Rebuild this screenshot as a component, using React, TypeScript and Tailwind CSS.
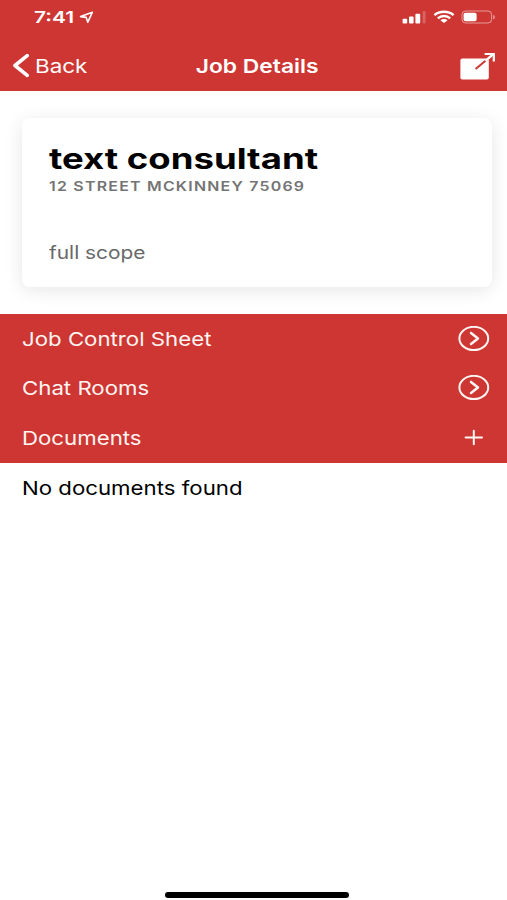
import React from "react";

interface RowProps {
    label: string;
    icon: React.ReactNode;
}

const CircleArrow = () => (
    <svg width="32" height="26" viewBox="0 0 32 26" fill="none" stroke="#fff5f2">
        <ellipse cx="15.8" cy="12.4" rx="14.4" ry="11.6" strokeWidth="2" />
        <path d="M13 6.9 L20 12.4 L13 17.9" strokeWidth="2.5" strokeLinecap="round" strokeLinejoin="round" />
    </svg>
);

const Plus = () => (
    <svg width="32" height="26" viewBox="0 0 32 26" fill="none" stroke="#fff5f2" strokeWidth="2" strokeLinecap="round">
        <path d="M7.6 12.5 H24 M15.8 5.8 V19.2" />
    </svg>
);

const rows: RowProps[] = [
    { label: "Job Control Sheet", icon: <CircleArrow /> },
    { label: "Chat Rooms", icon: <CircleArrow /> },
    { label: "Documents", icon: <Plus /> },
];

const StatusBar = () => (
    <div className="flex h-[34px] items-center justify-between pl-[34px] pr-[11px]">
        <div className="flex items-center pt-px">
            <span className="w-[45px] whitespace-nowrap text-[16.5px] leading-none font-semibold">
                <span className="inline-block origin-left scale-x-[1.27]">7:41</span>
            </span>
            <svg width="15" height="13" viewBox="0 0 15 13" fill="none" stroke="#fff" strokeWidth="1.6" strokeLinejoin="round">
                <path d="M13.4 1.2 L1.6 5.6 L7.2 6.4 L8.8 11.2 Z" />
            </svg>
        </div>
        <div className="flex items-center">
            <svg width="24" height="14" viewBox="0 0 24 14" fill="#fff">
                <rect x="0.6" y="8.8" width="4.6" height="4.6" rx="1" />
                <rect x="7" y="6.6" width="4.6" height="6.8" rx="1" />
                <rect x="13.4" y="3.8" width="4.8" height="9.6" rx="1" />
                <rect x="20.6" y="1" width="3" height="12.4" rx="1" fillOpacity="0.22" />
            </svg>
            <svg className="ml-[7px]" width="22" height="14" viewBox="0 0 22 14" fill="none" stroke="#fff" strokeWidth="2.3">
                <path d="M1.4 5.2 C6.5 0.6 15.5 0.6 20.6 5.2" />
                <path d="M4.8 8.3 C8.2 5.2 13.8 5.2 17.2 8.3" />
                <path d="M11 13 L7.4 10.2 C9.3 8.7 12.7 8.7 14.6 10.2 Z" fill="#fff" stroke="none" />
            </svg>
            <svg className="ml-[6px]" width="35" height="14" viewBox="0 0 35 14">
                <rect x="1" y="1" width="29.6" height="12" rx="3.6" fill="none" stroke="#fff" strokeOpacity="0.5" />
                <rect x="2.6" y="2.8" width="13" height="8.4" rx="1.8" fill="#fff" />
                <path d="M32.2 5 C34.4 5.6 34.4 8.8 32.2 9.4 Z" fill="#fff" fillOpacity="0.5" />
            </svg>
        </div>
    </div>
);

const NavBar = () => (
    <div className="grid h-[56px] grid-cols-[140px_1fr_140px] items-center text-[19px]">
        <div className="flex items-center pt-2 pl-3">
            <svg width="18" height="24" viewBox="0 0 18 24" fill="none" stroke="#fff" strokeWidth="3.6" strokeLinecap="round" strokeLinejoin="round">
                <path d="M15.2 1.6 L3 11.5 L15.2 21.4" />
            </svg>
            <span className="ml-[5px] inline-block origin-left scale-x-[1.18] pt-0.5 leading-6">Back</span>
        </div>
        <div className="pt-2.5 pl-2 text-center leading-6 font-semibold">
            <span className="inline-block scale-x-[1.2] whitespace-nowrap">Job Details</span>
        </div>
        <div className="flex justify-end pt-2 pr-[11px]">
            <svg width="37" height="28" viewBox="0 0 37 28" fill="none">
                <rect x="1.4" y="6.4" width="28.4" height="21.2" rx="2" fill="#fff" />
                <path d="M16.6 17 L34 2.4" stroke="#ce3633" strokeWidth="2" />
                <path d="M26.4 8.8 L34 2.4" stroke="#fff" strokeWidth="2.4" />
                <path d="M25.6 2 H34.8 V9.4" stroke="#fff" strokeWidth="2.2" />
            </svg>
        </div>
    </div>
);

const JobCard = () => (
    <div className="mt-[27px] ml-[22px] h-[169px] w-[470px] rounded-lg bg-white pt-6 pl-[27px] shadow-[0_3px_18px_rgba(0,0,0,0.1)]">
        <h2 className="text-[29px] leading-[34px] font-bold text-black">
            <span className="inline-block origin-left scale-x-[1.26] whitespace-nowrap">text consultant</span>
        </h2>
        <p className="text-[13px] leading-5 font-semibold tracking-[1px] text-[#747474]">
            <span className="inline-block origin-left scale-x-[1.225] whitespace-nowrap">12 STREET MCKINNEY 75069</span>
        </p>
        <p className="mt-[45px] text-[18px] leading-6 text-[#686868]">
            <span className="inline-block origin-left scale-x-[1.16] whitespace-nowrap">full scope</span>
        </p>
    </div>
);

const Row = ({ label, icon }: RowProps) => (
    <div className="flex h-[49.5px] items-center justify-between pr-[17px] pl-[21.5px]">
        <span className="inline-block origin-left scale-x-[1.17] pt-0.5 whitespace-nowrap">{label}</span>
        {icon}
    </div>
);

export default function App() {
    return (
        <main className="flex h-[900px] w-[507px] flex-col overflow-hidden bg-white font-['Inter','Liberation_Sans',sans-serif]">
            <header className="h-[90.5px] shrink-0 bg-[#ce3633] text-white">
                <StatusBar />
                <NavBar />
            </header>

            <section className="h-[223.5px] shrink-0">
                <JobCard />
            </section>

            <section className="h-[148.5px] shrink-0 bg-[#ce3633] text-[19px] text-[#fff5f2]">
                {rows.map((row) => (
                    <Row key={row.label} {...row} />
                ))}
            </section>

            <p className="pt-[13px] pl-[21.5px] text-[19px] leading-[26px] text-black">
                <span className="inline-block origin-left scale-x-[1.17] whitespace-nowrap">No documents found</span>
            </p>

            {/* ホームインジケーター */}
            <div className="mt-auto mb-[2px] ml-[165px] h-[6px] w-[184px] rounded-full bg-black" />
        </main>
    );
}
